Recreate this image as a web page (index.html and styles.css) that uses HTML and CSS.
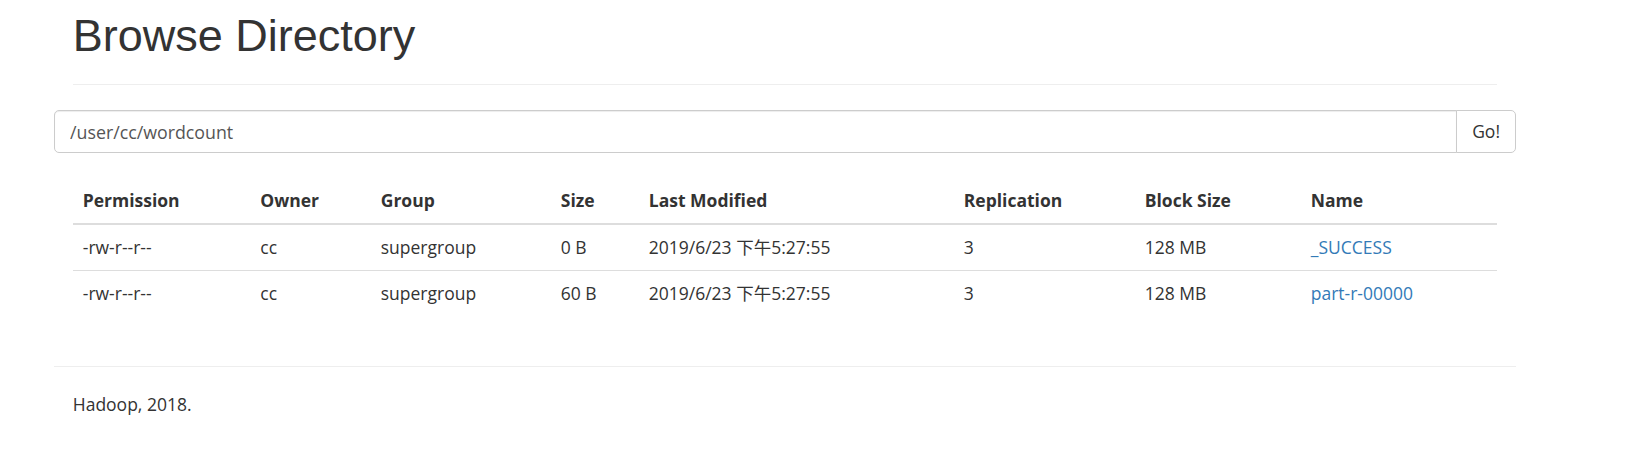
FILE: index.html
```
<!DOCTYPE html>
<html>
<head>
<meta charset="utf-8">
<title>Browse Directory</title>
<link rel="stylesheet" href="styles.css">
</head>
<body>
<div class="container">
  <div class="page-header"><h1>Browse Directory</h1></div>
  <div class="row">
    <form class="input-group" onsubmit="return false;">
      <input type="text" class="form-control" value="/user/cc/wordcount">
      <button class="btn" type="button">Go!</button>
    </form>
  </div>
  <div class="spacer"></div>
  <table class="table">
    <thead>
      <tr>
        <th class="c-perm">Permission</th>
        <th class="c-owner">Owner</th>
        <th class="c-group">Group</th>
        <th class="c-size">Size</th>
        <th class="c-mod">Last Modified</th>
        <th class="c-rep">Replication</th>
        <th class="c-block">Block Size</th>
        <th class="c-name">Name</th>
      </tr>
    </thead>
    <tbody>
      <tr>
        <td>-rw-r--r--</td>
        <td>cc</td>
        <td>supergroup</td>
        <td>0 B</td>
        <td>2019/6/23 下午5:27:55</td>
        <td>3</td>
        <td>128 MB</td>
        <td><a href="#">_SUCCESS</a></td>
      </tr>
      <tr>
        <td>-rw-r--r--</td>
        <td>cc</td>
        <td>supergroup</td>
        <td>60 B</td>
        <td>2019/6/23 下午5:27:55</td>
        <td>3</td>
        <td>128 MB</td>
        <td><a href="#">part-r-00000</a></td>
      </tr>
    </tbody>
  </table>
  <div class="row footer">
    <hr class="footer-rule">
    <p class="footer-text">Hadoop, 2018.</p>
  </div>
</div>
</body>
</html>
```
FILE: styles.css
```
* { box-sizing: border-box; }
html, body { margin: 0; padding: 0; background: #fff; }
body {
  font-family: "Open Sans", "Noto Sans CJK SC", sans-serif;
  font-size: 17.5px;
  line-height: 25px;
  color: #333;
}
.container {
  margin-left: 54px;
  width: 1462px;
  padding: 0 18.75px;
}
.page-header {
  padding-top: 11px;
  padding-bottom: 11.25px;
  margin-bottom: 25px;
  border-bottom: 1px solid #eee;
}
.page-header h1 {
  margin: 0 0 12.5px 0;
  font-family: "Liberation Sans", Arial, sans-serif;
  font-weight: 400;
  font-size: 45px;
  line-height: 49.5px;
  color: #333;
}
.row {
  margin-left: -18.75px;
  margin-right: -18.75px;
}
.input-group {
  display: flex;
  margin: 0;
  height: 42.5px;
}
.form-control {
  flex: 1;
  height: 42.5px;
  padding: 7.5px 15px;
  font-family: inherit;
  font-size: 17.8px;
  line-height: 25px;
  color: #555;
  background: #fff;
  border: 1px solid #ccc;
  border-radius: 5px 0 0 5px;
  box-shadow: inset 0 1px 1px rgba(0,0,0,.075);
  outline: none;
}
.btn {
  height: 42.5px;
  padding: 7.5px 15px;
  margin-left: -1px;
  font-family: inherit;
  font-size: 17.5px;
  line-height: 25px;
  color: #333;
  background: #fff;
  border: 1px solid #ccc;
  border-radius: 0 5px 5px 0;
}
.spacer { height: 25px; }
.table {
  width: 100%;
  border-collapse: collapse;
  border-spacing: 0;
  table-layout: fixed;
  margin-bottom: 25px;
}
.table th, .table td {
  padding: 10px;
  text-align: left;
  vertical-align: top;
  line-height: 25px;
  white-space: nowrap;
}
.table th {
  font-weight: 700;
  border-bottom: 2.5px solid #ddd;
}
.table td {
  border-top: 1px solid #ddd;
}
.table a { color: #337ab7; text-decoration: none; }
.c-perm { width: 177.5px; }
.c-owner { width: 120.5px; }
.c-group { width: 180px; }
.c-size { width: 88px; }
.c-mod { width: 315px; }
.c-rep { width: 181px; }
.c-block { width: 166px; }
.c-name { width: auto; }
.footer { display: flow-root; }
.footer-rule {
  margin: 25px 0;
  border: 0;
  border-top: 1px solid #eee;
  height: 0;
}
.footer-text {
  margin: 0;
  padding: 0 18.75px;
}
```
